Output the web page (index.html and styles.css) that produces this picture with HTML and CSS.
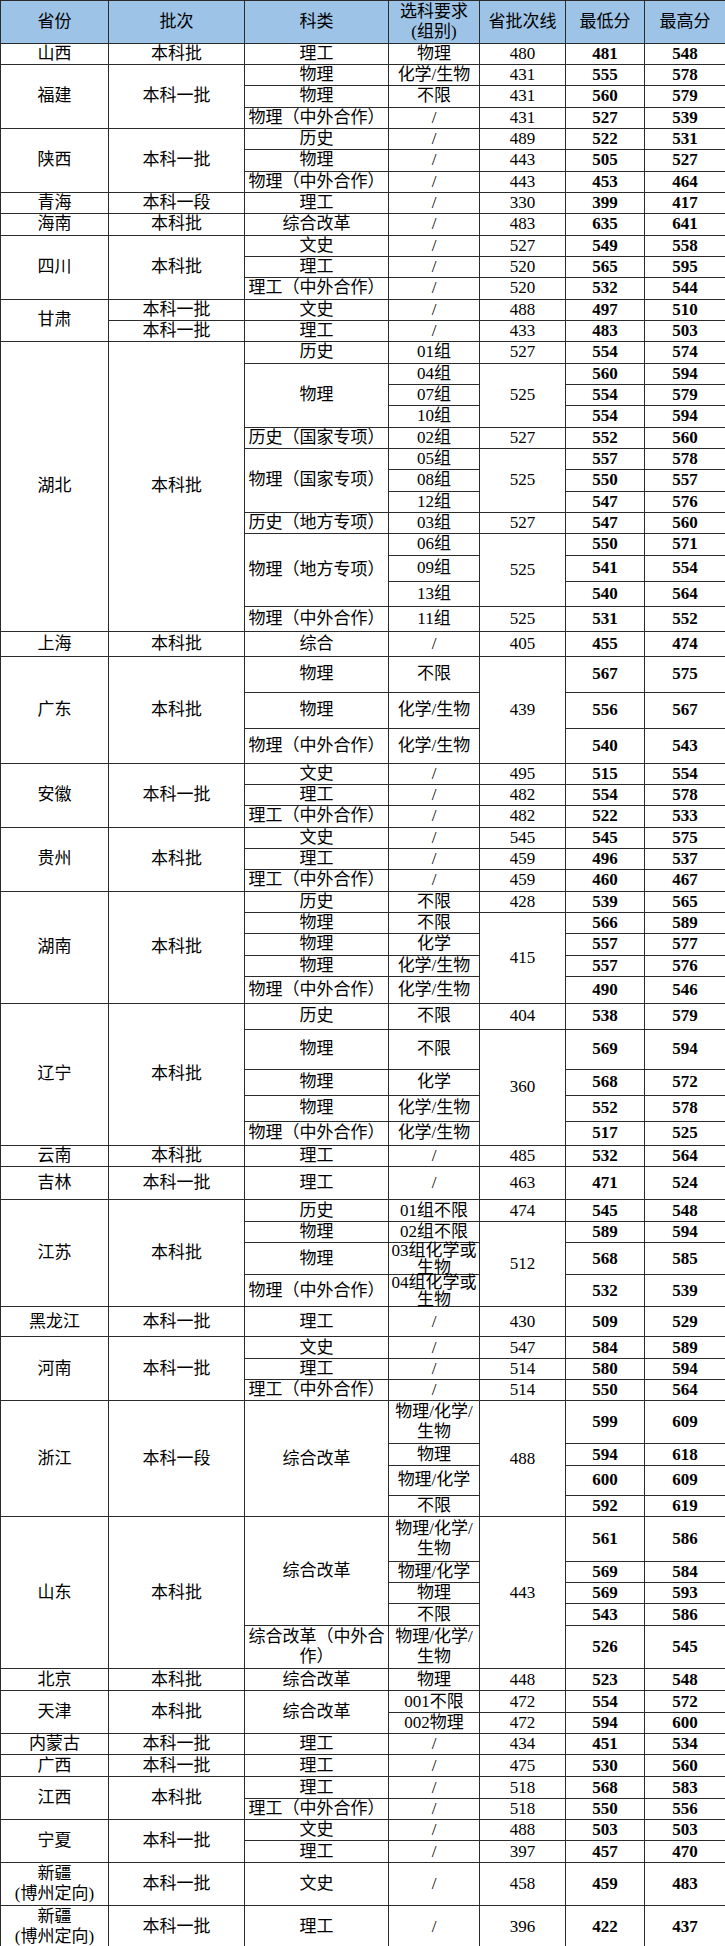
FILE: index.html
```html
<!DOCTYPE html>
<html lang="zh-CN">
<head>
<meta charset="utf-8">
<title>录取分数</title>
<link rel="stylesheet" href="styles.css">
</head>
<body>
<table class="score">
<colgroup>
<col class="c1"><col class="c2"><col class="c3"><col class="c4"><col class="c5"><col class="c6"><col class="c7">
</colgroup>
<thead>
<tr class="hd"><th>省份</th><th>批次</th><th>科类</th><th>选科要求<br>(组别)</th><th>省批次线</th><th>最低分</th><th>最高分</th></tr>
</thead>
<tbody>
<tr class="r21"><td>山西</td><td>本科批</td><td>理工</td><td>物理</td><td>480</td><td class="b">481</td><td class="b">548</td></tr>

<tr><td rowspan="3">福建</td><td rowspan="3">本科一批</td><td>物理</td><td>化学/生物</td><td>431</td><td class="b">555</td><td class="b">578</td></tr>
<tr><td>物理</td><td>不限</td><td>431</td><td class="b">560</td><td class="b">579</td></tr>
<tr><td>物理（中外合作）</td><td>/</td><td>431</td><td class="b">527</td><td class="b">539</td></tr>

<tr><td rowspan="3">陕西</td><td rowspan="3">本科一批</td><td>历史</td><td>/</td><td>489</td><td class="b">522</td><td class="b">531</td></tr>
<tr><td>物理</td><td>/</td><td>443</td><td class="b">505</td><td class="b">527</td></tr>
<tr><td>物理（中外合作）</td><td>/</td><td>443</td><td class="b">453</td><td class="b">464</td></tr>

<tr><td>青海</td><td>本科一段</td><td>理工</td><td>/</td><td>330</td><td class="b">399</td><td class="b">417</td></tr>
<tr><td>海南</td><td>本科批</td><td>综合改革</td><td>/</td><td>483</td><td class="b">635</td><td class="b">641</td></tr>

<tr><td rowspan="3">四川</td><td rowspan="3">本科批</td><td>文史</td><td>/</td><td>527</td><td class="b">549</td><td class="b">558</td></tr>
<tr><td>理工</td><td>/</td><td>520</td><td class="b">565</td><td class="b">595</td></tr>
<tr><td>理工（中外合作）</td><td>/</td><td>520</td><td class="b">532</td><td class="b">544</td></tr>

<tr><td rowspan="2">甘肃</td><td>本科一批</td><td>文史</td><td>/</td><td>488</td><td class="b">497</td><td class="b">510</td></tr>
<tr><td>本科一批</td><td>理工</td><td>/</td><td>433</td><td class="b">483</td><td class="b">503</td></tr>

<tr><td rowspan="13">湖北</td><td rowspan="13">本科批</td><td>历史</td><td>01组</td><td>527</td><td class="b">554</td><td class="b">574</td></tr>
<tr><td rowspan="3">物理</td><td>04组</td><td rowspan="3">525</td><td class="b">560</td><td class="b">594</td></tr>
<tr><td>07组</td><td class="b">554</td><td class="b">579</td></tr>
<tr><td>10组</td><td class="b">554</td><td class="b">594</td></tr>
<tr><td>历史（国家专项）</td><td>02组</td><td>527</td><td class="b">552</td><td class="b">560</td></tr>
<tr><td rowspan="3">物理（国家专项）</td><td>05组</td><td rowspan="3">525</td><td class="b">557</td><td class="b">578</td></tr>
<tr><td>08组</td><td class="b">550</td><td class="b">557</td></tr>
<tr><td>12组</td><td class="b">547</td><td class="b">576</td></tr>
<tr><td>历史（地方专项）</td><td>03组</td><td>527</td><td class="b">547</td><td class="b">560</td></tr>
<tr><td rowspan="3">物理（地方专项）</td><td>06组</td><td rowspan="3">525</td><td class="b">550</td><td class="b">571</td></tr>
<tr class="r26"><td>09组</td><td class="b">541</td><td class="b">554</td></tr>
<tr class="r25"><td>13组</td><td class="b">540</td><td class="b">564</td></tr>
<tr class="r25"><td>物理（中外合作）</td><td>11组</td><td>525</td><td class="b">531</td><td class="b">552</td></tr>

<tr class="r25"><td>上海</td><td>本科批</td><td>综合</td><td>/</td><td>405</td><td class="b">455</td><td class="b">474</td></tr>

<tr class="r36"><td rowspan="3">广东</td><td rowspan="3">本科批</td><td>物理</td><td>不限</td><td rowspan="3">439</td><td class="b">567</td><td class="b">575</td></tr>
<tr class="r36"><td>物理</td><td>化学/生物</td><td class="b">556</td><td class="b">567</td></tr>
<tr class="r35"><td>物理（中外合作）</td><td>化学/生物</td><td class="b">540</td><td class="b">543</td></tr>

<tr><td rowspan="3">安徽</td><td rowspan="3">本科一批</td><td>文史</td><td>/</td><td>495</td><td class="b">515</td><td class="b">554</td></tr>
<tr><td>理工</td><td>/</td><td>482</td><td class="b">554</td><td class="b">578</td></tr>
<tr><td>理工（中外合作）</td><td>/</td><td>482</td><td class="b">522</td><td class="b">533</td></tr>

<tr><td rowspan="3">贵州</td><td rowspan="3">本科批</td><td>文史</td><td>/</td><td>545</td><td class="b">545</td><td class="b">575</td></tr>
<tr><td>理工</td><td>/</td><td>459</td><td class="b">496</td><td class="b">537</td></tr>
<tr><td>理工（中外合作）</td><td>/</td><td>459</td><td class="b">460</td><td class="b">467</td></tr>

<tr><td rowspan="5">湖南</td><td rowspan="5">本科批</td><td>历史</td><td>不限</td><td>428</td><td class="b">539</td><td class="b">565</td></tr>
<tr><td>物理</td><td>不限</td><td rowspan="4">415</td><td class="b">566</td><td class="b">589</td></tr>
<tr><td>物理</td><td>化学</td><td class="b">557</td><td class="b">577</td></tr>
<tr><td>物理</td><td>化学/生物</td><td class="b">557</td><td class="b">576</td></tr>
<tr class="r27"><td>物理（中外合作）</td><td>化学/生物</td><td class="b">490</td><td class="b">546</td></tr>

<tr class="r26"><td rowspan="5">辽宁</td><td rowspan="5">本科批</td><td>历史</td><td>不限</td><td>404</td><td class="b">538</td><td class="b">579</td></tr>
<tr class="r40"><td>物理</td><td>不限</td><td rowspan="4">360</td><td class="b">569</td><td class="b">594</td></tr>
<tr class="r26"><td>物理</td><td>化学</td><td class="b">568</td><td class="b">572</td></tr>
<tr class="r26"><td>物理</td><td>化学/生物</td><td class="b">552</td><td class="b">578</td></tr>
<tr class="r24"><td>物理（中外合作）</td><td>化学/生物</td><td class="b">517</td><td class="b">525</td></tr>

<tr><td>云南</td><td>本科批</td><td>理工</td><td>/</td><td>485</td><td class="b">532</td><td class="b">564</td></tr>
<tr class="r33"><td>吉林</td><td>本科一批</td><td>理工</td><td>/</td><td>463</td><td class="b">471</td><td class="b">524</td></tr>

<tr class="r22"><td rowspan="4">江苏</td><td rowspan="4">本科批</td><td>历史</td><td>01组不限</td><td>474</td><td class="b">545</td><td class="b">548</td></tr>
<tr><td>物理</td><td>02组不限</td><td rowspan="3">512</td><td class="b">589</td><td class="b">594</td></tr>
<tr class="r32"><td>物理</td><td><div class="squeeze"><span>03组化学或生物</span></div></td><td class="b">568</td><td class="b">585</td></tr>
<tr class="r32"><td>物理（中外合作）</td><td><div class="squeeze"><span>04组化学或生物</span></div></td><td class="b">532</td><td class="b">539</td></tr>

<tr class="r30"><td>黑龙江</td><td>本科一批</td><td>理工</td><td>/</td><td>430</td><td class="b">509</td><td class="b">529</td></tr>

<tr><td rowspan="3">河南</td><td rowspan="3">本科一批</td><td>文史</td><td>/</td><td>547</td><td class="b">584</td><td class="b">589</td></tr>
<tr><td>理工</td><td>/</td><td>514</td><td class="b">580</td><td class="b">594</td></tr>
<tr><td>理工（中外合作）</td><td>/</td><td>514</td><td class="b">550</td><td class="b">564</td></tr>

<tr class="r43"><td rowspan="4">浙江</td><td rowspan="4">本科一段</td><td rowspan="4">综合改革</td><td>物理/化学/生物</td><td rowspan="4">488</td><td class="b">599</td><td class="b">609</td></tr>
<tr><td>物理</td><td class="b">594</td><td class="b">618</td></tr>
<tr class="r30"><td>物理/化学</td><td class="b">600</td><td class="b">609</td></tr>
<tr><td>不限</td><td class="b">592</td><td class="b">619</td></tr>

<tr class="r45"><td rowspan="5">山东</td><td rowspan="5">本科批</td><td rowspan="4">综合改革</td><td>物理/化学/生物</td><td rowspan="5">443</td><td class="b">561</td><td class="b">586</td></tr>
<tr class="r20"><td>物理/化学</td><td class="b">569</td><td class="b">584</td></tr>
<tr><td>物理</td><td class="b">569</td><td class="b">593</td></tr>
<tr class="r22"><td>不限</td><td class="b">543</td><td class="b">586</td></tr>
<tr class="r43"><td>综合改革（中外合作）</td><td>物理/化学/生物</td><td class="b">526</td><td class="b">545</td></tr>

<tr class="r22"><td>北京</td><td>本科批</td><td>综合改革</td><td>物理</td><td>448</td><td class="b">523</td><td class="b">548</td></tr>

<tr><td rowspan="2">天津</td><td rowspan="2">本科批</td><td rowspan="2">综合改革</td><td>001不限</td><td>472</td><td class="b">554</td><td class="b">572</td></tr>
<tr><td>002物理</td><td>472</td><td class="b">594</td><td class="b">600</td></tr>

<tr><td>内蒙古</td><td>本科一批</td><td>理工</td><td>/</td><td>434</td><td class="b">451</td><td class="b">534</td></tr>
<tr class="r22"><td>广西</td><td>本科一批</td><td>理工</td><td>/</td><td>475</td><td class="b">530</td><td class="b">560</td></tr>

<tr><td rowspan="2">江西</td><td rowspan="2">本科批</td><td>理工</td><td>/</td><td>518</td><td class="b">568</td><td class="b">583</td></tr>
<tr><td>理工（中外合作）</td><td>/</td><td>518</td><td class="b">550</td><td class="b">556</td></tr>

<tr><td rowspan="2">宁夏</td><td rowspan="2">本科一批</td><td>文史</td><td>/</td><td>488</td><td class="b">503</td><td class="b">503</td></tr>
<tr><td>理工</td><td>/</td><td>397</td><td class="b">457</td><td class="b">470</td></tr>

<tr class="r43"><td>新疆<br>(博州定向)</td><td>本科一批</td><td>文史</td><td>/</td><td>458</td><td class="b">459</td><td class="b">483</td></tr>
<tr class="r43"><td>新疆<br>(博州定向)</td><td>本科一批</td><td>理工</td><td>/</td><td>396</td><td class="b">422</td><td class="b">437</td></tr>
</tbody>
</table>
</body>
</html>
```
FILE: styles.css
```css
html, body {
  margin: 0;
  padding: 0;
  background: #ffffff;
}

.score {
  width: 725px;
  border-collapse: collapse;
  table-layout: fixed;
  font-family: "Liberation Serif", "Noto Sans CJK SC", serif;
  font-size: 17px;
  color: #000;
}

.c1 { width: 108px; }
.c2 { width: 136px; }
.c3 { width: 144px; }
.c4 { width: 91px; }
.c5 { width: 86px; }
.c6 { width: 79px; }
.c7 { width: 81px; }

.score th,
.score td {
  border: 1px solid #2b2b2b;
  padding: 0 2px;
  text-align: center;
  vertical-align: middle;
  line-height: 20px;
  font-weight: normal;
  overflow: visible;
}

.score th {
  background: #9dc3e6;
}

.score td.b {
  font-weight: bold;
}

.score tr { height: 21.33px; }
.score tr.hd { height: 43px; }
.score tr.r20 { height: 20px; }
.score tr.r21 { height: 21px; }
.score tr.r22 { height: 22px; }
.score tr.r24 { height: 24px; }
.score tr.r25 { height: 25px; }
.score tr.r26 { height: 26px; }
.score tr.r27 { height: 27px; }
.score tr.r30 { height: 30px; }
.score tr.r32 { height: 32px; }
.score tr.r33 { height: 33px; }
.score tr.r35 { height: 35px; }
.score tr.r36 { height: 36px; }
.score tr.r40 { height: 40px; }
.score tr.r43 { height: 43px; }
.score tr.r45 { height: 45px; }

.squeeze {
  height: 30px;
  display: flex;
  align-items: center;
  justify-content: center;
  line-height: 17px;
}

.squeeze span {
  width: 100%;
}
```
